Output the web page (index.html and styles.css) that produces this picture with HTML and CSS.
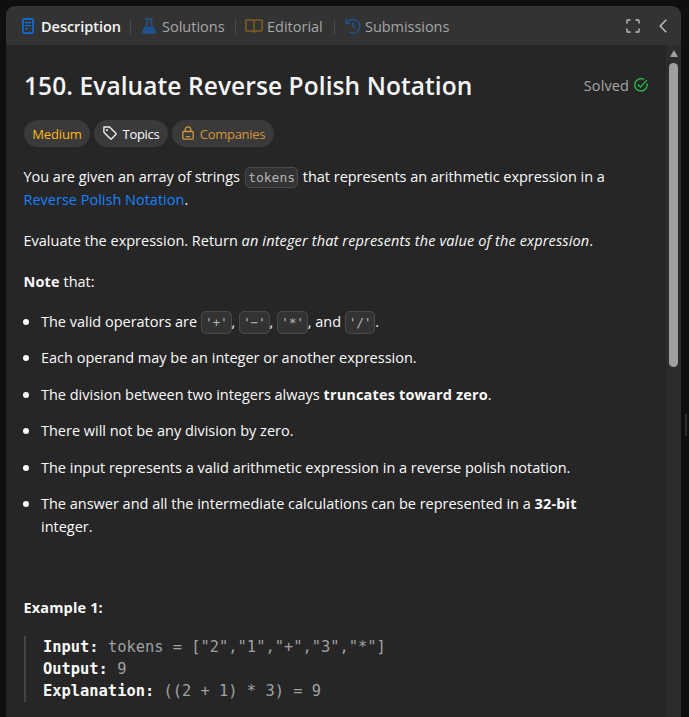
FILE: index.html
```html
<!DOCTYPE html>
<html lang="en">
<head>
<meta charset="utf-8">
<title>Evaluate Reverse Polish Notation</title>
<link rel="stylesheet" href="styles.css">
</head>
<body>
<main class="panel">
  <header class="tabs">
    <div class="tab tab-active">
      <svg class="icon-doc" width="12" height="16" viewBox="0 0 12 16" fill="none" stroke="#0a6fe0" stroke-width="1.7"><rect x=".9" y=".9" width="10.2" height="14.2" rx="1.8"/><path d="M3 4.600h6M3 7.600h6M3 10.600h3" stroke-width="1.2"/></svg>
      <span class="t-desc">Description</span>
    </div>
    <i class="sep"></i>
    <div class="tab">
      <svg class="icon-flask" width="14" height="16" viewBox="0 0 14 16"><path d="M3 .8h8M5 1v5L1.200 12.700Q.2 15 2.400 15h9.200q2.200 0 1.200-2.300L9 6V1" fill="none" stroke="#20538b" stroke-width="1.5"/><path d="M3.200 8.500h7.600L13 14l-1 1.500H2L1 14z" fill="#20538b"/></svg>
      <span class="t-sol">Solutions</span>
    </div>
    <i class="sep"></i>
    <div class="tab">
      <svg class="icon-book" width="18" height="14" viewBox="0 0 18 14" fill="none" stroke="#80601b" stroke-width="1.5" stroke-linejoin="round"><path d="M9 2.500Q9 1 7.300 1H2Q.8 1 .8 2v9q0 1 1.200 1h4.500Q8.200 12 9 13.200 9.800 12 11.500 12H16q1.200 0 1.200-1V2q0-1-1.200-1h-5.300Q9 1 9 2.500v10.700"/></svg>
      <span class="t-edit">Editorial</span>
    </div>
    <i class="sep"></i>
    <div class="tab">
      <svg class="icon-history" width="16" height="16" viewBox="0 0 16 16" fill="none" stroke="#20538b" stroke-width="1.5"><path d="M2.300 4.500A6.800 6.800 0 1 1 4 13.700M1 1.300v4h4.300M8 4v4.300l2.700 2.200"/></svg>
      <span class="t-sub">Submissions</span>
    </div>
    <div class="tools">
      <svg width="14" height="14" viewBox="0 0 14 14" fill="none" stroke="#a4a4a4" stroke-width="1.8"><path d="M1 4.500V2q0-1 1-1h2.500M9.500 1H12q1 0 1 1v2.500M13 9.500V12q0 1-1 1H9.500M4.500 13H2q-1 0-1-1V9.500"/></svg>
      <svg width="8" height="14" viewBox="0 0 8 14" fill="none" stroke="#bdbdbd" stroke-width="1.500"><path d="M7.300.8 1.200 7l6.100 6.200"/></svg>
    </div>
  </header>
  <div class="view">
    <article class="content">
      <div class="title-row">
        <h1>150. Evaluate Reverse Polish Notation</h1>
        <div class="solved"><span>Solved</span>
          <svg width="14" height="14" viewBox="0 0 14 14" fill="none" stroke="#28b84c" stroke-width="1.400" stroke-linecap="round" stroke-linejoin="round"><path d="M9.500 1.200A6.200 6.200 0 1 0 13.100 6M4.300 6.900l2.200 2.200 6-6.500"/></svg>
        </div>
      </div>
      <div class="pills">
        <span class="pill medium">Medium</span>
        <span class="pill topics"><svg width="14" height="14" viewBox="0 0 14 14" fill="none" stroke="#ededed" stroke-width="1.400" stroke-linejoin="round"><path d="M.9 1h5.700l6.200 6.200q.6.6 0 1.200l-4.200 4.300q-.6.6-1.200 0L.9 6.300z"/><circle cx="4" cy="4.100" r=".4"/></svg>Topics</span>
        <span class="pill companies"><svg width="12" height="14" viewBox="0 0 12 14" fill="none" stroke="#d4963a" stroke-width="1.300"><rect x=".8" y="5.500" width="10.400" height="7.700" rx="1.200"/><path d="M3.200 5.500V3.700a2.800 2.800 0 0 1 5.600 0v1.800M3.800 10.600h4.400"/></svg>Companies</span>
      </div>
      <p class="intro">You are given an array of strings <code>tokens</code> that represents an arithmetic expression in a<br><a>Reverse Polish Notation</a>.</p>
      <p>Evaluate the expression. Return <em>an integer that represents the value of the expression</em>.</p>
      <p class="note"><b>Note</b> that:</p>
      <ul>
        <li class="ops">The valid operators are <code>'+'</code>, <code>'−'</code>, <code>'*'</code>, and <code>'/'</code>.</li>
        <li>Each operand may be an integer or another expression.</li>
        <li>The division between two integers always <b>truncates toward zero</b>.</li>
        <li>There will not be any division by zero.</li>
        <li>The input represents a valid arithmetic expression in a reverse polish notation.</li>
        <li>The answer and all the intermediate calculations can be represented in a <b>32-bit</b><br>integer.</li>
      </ul>
      <p class="example"><b>Example 1:</b></p>
      <pre><b>Input:</b> tokens = ["2","1","+","3","*"]
<b>Output:</b> 9
<b>Explanation:</b> ((2 + 1) * 3) = 9</pre>
    </article>
    <div class="scrollbar"><i class="arrow"></i><i class="thumb"></i></div>
  </div>
</main>
<div class="gutter"><i></i></div>
</body>
</html>
```
FILE: styles.css
```css
* { box-sizing: border-box; }
body {
  margin: 0; height: 717px; overflow: hidden; display: flex;
  background: #0f0f0f; color: #fafafa;
  font: 14.5px/23px "Open Sans", "Noto Sans", sans-serif;
}
.panel {
  width: 675px; margin: 6px 0 0 6px; border-radius: 9px 9px 0 0;
  background: #262626; overflow: hidden; display: flex; flex-direction: column;
}
.tabs {
  flex: none; height: 39px; background: #333; display: flex; align-items: center;
  padding: 2px 14px 0 16px; color: #a6a6a6; white-space: nowrap;
}
.tab { display: flex; align-items: center; }
.tab svg { flex: none; margin-top: -1px; }
.tab span { display: block; }
.tab-active { color: #f5f5f5; font-weight: 600; }
.icon-doc { margin-right: 7px; }
.icon-flask { margin-right: 6px; }
.icon-book { margin-right: 4px; }
.icon-history { margin-right: 4px; }
.t-desc { width: 80px; letter-spacing: -.05px; }
.t-sol { width: 64px; }
.t-edit { width: 56px; }
.t-sub { width: 86px; letter-spacing: -.05px; }
.sep { width: 1px; height: 14px; background: #4b4b4b; margin: 0 11px 0 9px; }
.tab + .sep + .tab + .sep { margin-right: 9px; }
.tab + .sep + .tab + .sep + .tab + .sep { margin-right: 10px; margin-left: 11px; }
.tools { margin-left: auto; display: flex; align-items: center; gap: 19px; position: relative; top: -1px; }
.view { flex: 1; display: flex; min-height: 0; }
.content { width: 660px; padding: 26px 17px 0 17.500px; white-space: nowrap; }
.title-row { display: flex; justify-content: space-between; align-items: center; height: 30px; }
h1 { margin: 0 0 0 .5px; font-size: 24.500px; line-height: 30px; font-weight: 600; letter-spacing: .08px; color: #f5f5f5; }
.solved { display: flex; align-items: center; gap: 5px; color: #a6a6a6; padding-right: 1px; letter-spacing: .1px; position: relative; top: -1px; }
.pills { display: flex; gap: 4px; margin: 19px 0 18px .5px; font-size: 13px; line-height: 28px; }
.pill { height: 27px; border-radius: 14px; background: #3a3a3a; display: flex; align-items: center; justify-content: center; gap: 6px; }
.pill svg { margin-top: -2px; }
.medium { width: 66px; color: #fdb91a; letter-spacing: -.15px; }
.topics { width: 74px; letter-spacing: -.3px; }
.companies { width: 102px; color: #d4963a; letter-spacing: -.3px; padding-left: 1px; }
p { margin: 0 0 18px; }
.intro { letter-spacing: -.03px; }
a { color: #1682ff; letter-spacing: 0; }
em { letter-spacing: .14px; }
b { letter-spacing: .15px; }
code {
  font: 13px/15px "DejaVu Sans Mono", monospace; color: #b3b3b3;
  background: #333; border: 1px solid #4a4a4a; border-radius: 5px; padding: 2px;
}
.intro code { margin: 0 1px 0 1.500px; letter-spacing: 0; }
.ops code { padding: 3px; letter-spacing: -.3px; }
ul { list-style: none; margin: -1px 0 58px; padding: 0 0 0 17.500px; letter-spacing: -.01px; }
li { margin-bottom: 13.400px; }
li::before {
  content: ""; display: inline-block; width: 6px; height: 6px;
  margin: 0 12px 2px -18px; border-radius: 50%; background: #fafafa;
}
pre {
  margin: -1px 0 0; border-left: 2px solid #454545; padding: 0 0 0 17.500px; height: 66px;
  font: 15.400px/22px "DejaVu Sans Mono", monospace; color: #a0a0a0;
}
pre b { color: #fafafa; letter-spacing: 0; }
.scrollbar { width: 15px; background: #2c2c2c; display: flex; flex-direction: column; align-items: center; }
.arrow { border: 4.500px solid transparent; border-top: 0; border-bottom: 7px solid #9f9f9f; margin-top: 5px; }
.thumb { width: 9px; height: 304px; border-radius: 5px; background: #9f9f9f; margin-top: 6px; }
.gutter { flex: 1; display: flex; justify-content: flex-end; padding-top: 408px; }
.gutter i { width: 2px; height: 22px; background: #2f2f2f; margin: 6px 2px 0 0; }
```
